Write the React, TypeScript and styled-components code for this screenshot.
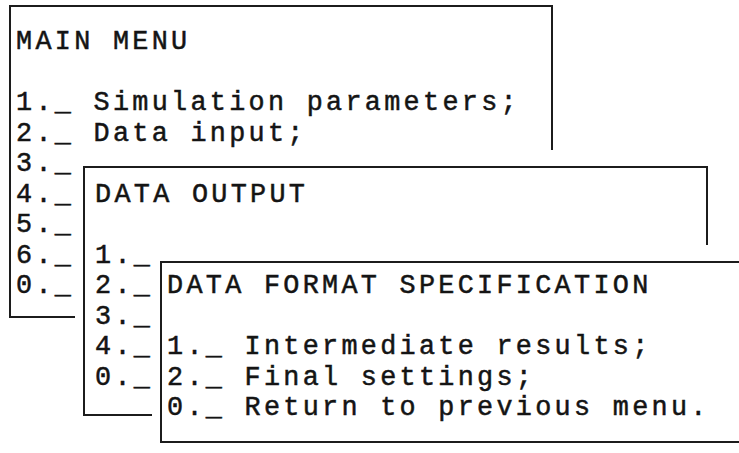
import React from 'react';
import styled, { createGlobalStyle } from 'styled-components';

const GlobalStyle = createGlobalStyle`
    html, body {
        margin: 0;
        padding: 0;
        background: #ffffff;
    }
    body {
        overflow: hidden;
    }
`;

const Desktop = styled.div`
    position: relative;
    width: 739px;
    height: 453px;
    overflow: hidden;
    background: #ffffff;
    font-family: "Liberation Mono", "DejaVu Sans Mono", monospace;
    font-size: 26.8px;
    line-height: 30.5px;
    letter-spacing: 3.3px;
    color: #141414;
    -webkit-text-stroke: 0.5px #141414;
    white-space: pre;
`;

const Window = styled.section<{ $x: number; $y: number; $w: number; $h: number; $padTop: number; $padLeft: number; $overlay?: boolean }>`
    position: absolute;
    left: ${(p) => p.$x}px;
    top: ${(p) => p.$y}px;
    width: ${(p) => p.$w}px;
    height: ${(p) => p.$h}px;
    box-sizing: border-box;
    padding: ${(p) => p.$padTop}px 0 0 ${(p) => p.$padLeft}px;
    border: 2px solid #1c1c1c;
    background: #ffffff;
    box-shadow: ${(p) => (p.$overlay ? '-8px -16px 0 0 #ffffff' : 'none')};
    display: flex;
    flex-direction: column;
`;

const Title = styled.div`
    margin-bottom: 30.5px;
`;

const Item = styled.div``;

type Menu = {
    title: string;
    items: string[];
    x: number;
    y: number;
    w: number;
    h: number;
    padTop: number;
    padLeft: number;
    overlay?: boolean;
};

const menus: Menu[] = [
    {
        title: 'MAIN MENU',
        items: ['1._ Simulation parameters;', '2._ Data input;', '3._', '4._', '5._', '6._', '0._'],
        x: 9, y: 5, w: 544, h: 313, padTop: 20, padLeft: 5,
    },
    {
        title: 'DATA OUTPUT',
        items: ['1._', '2._', '3._', '4._', '0._'],
        x: 83, y: 166, w: 625, h: 250, padTop: 11.5, padLeft: 10, overlay: true,
    },
    {
        title: 'DATA FORMAT SPECIFICATION',
        items: ['1._ Intermediate results;', '2._ Final settings;', '0._ Return to previous menu.'],
        x: 160, y: 261, w: 600, h: 182, padTop: 8, padLeft: 5, overlay: true,
    },
];

const App: React.FC = () => {
    return (
        <>
            <GlobalStyle />
            <Desktop>
                {menus.map((m) => (
                    <Window
                        key={m.title}
                        $x={m.x}
                        $y={m.y}
                        $w={m.w}
                        $h={m.h}
                        $padTop={m.padTop}
                        $padLeft={m.padLeft}
                        $overlay={m.overlay}
                    >
                        <Title>{m.title}</Title>
                        {m.items.map((it) => (
                            <Item key={it}>{it}</Item>
                        ))}
                    </Window>
                ))}
            </Desktop>
        </>
    );
};

export default App;
